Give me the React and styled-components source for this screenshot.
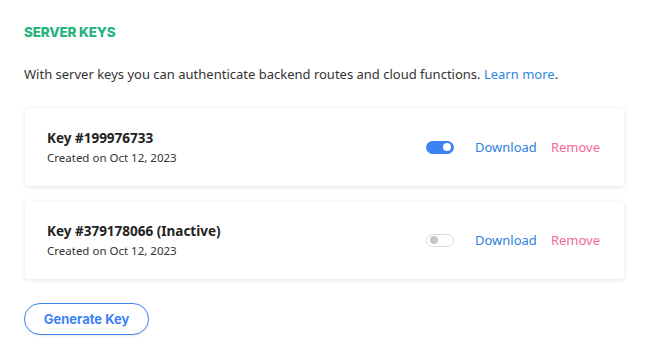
import React from "react";
import styled, { createGlobalStyle } from "styled-components";

const GlobalStyle = createGlobalStyle`
  * {
    box-sizing: border-box;
  }
  body {
    margin: 0;
    background: #ffffff;
    font-family: "Noto Sans", "Open Sans", sans-serif;
    color: #2b2b2b;
  }
`;

const Wrapper = styled.div`
  padding: 23px 24px 24px 24px;
  width: 650px;
`;

const Heading = styled.h3`
  font-family: "Inter", "Open Sans", sans-serif;
  font-weight: 800;
  font-size: 13.5px;
  line-height: 18px;
  letter-spacing: -0.2px;
  color: #25b47e;
  margin: 0 0 23px 0;
`;

const Intro = styled.p`
  font-size: 13px;
  line-height: 20px;
  margin: 0 0 24px 0;
  color: #333333;

  a {
    color: #2f86e0;
    text-decoration: none;
  }
`;

const List = styled.div`
  display: flex;
  flex-direction: column;
  gap: 15px;
  margin-left: 1px;
  width: 599px;
`;

const Card = styled.div`
  display: flex;
  align-items: center;
  height: 78px;
  padding: 0 24px 0 22px;
  background: #ffffff;
  border-radius: 4px;
  box-shadow: 0 1px 4px rgba(0, 0, 0, 0.12);
`;

const Info = styled.div`
  display: flex;
  flex-direction: column;
  gap: 2px;
`;

const Title = styled.div`
  font-weight: 700;
  font-size: 13.5px;
  line-height: 19px;
  color: #222222;
`;

const Sub = styled.div`
  font-size: 11.5px;
  line-height: 16px;
  color: #333333;
`;

const Actions = styled.div`
  margin-left: auto;
  display: flex;
  align-items: center;
`;

const Toggle = styled.span`
  position: relative;
  display: inline-block;
  width: 28px;
  height: 13px;
  border-radius: 7px;
  margin-right: 21px;
  background: ${({ $on }) => ($on ? "#3d82f5" : "#ffffff")};
  border: 1px solid ${({ $on }) => ($on ? "#3d82f5" : "#dddddd")};

  &::after {
    content: "";
    position: absolute;
    top: 1.5px;
    left: ${({ $on }) => ($on ? "15.5px" : "2.5px")};
    width: 8px;
    height: 8px;
    border-radius: 50%;
    background: ${({ $on }) => ($on ? "#ffffff" : "#c4c4c4")};
  }
`;

const LinkButton = styled.a`
  font-size: 13px;
  line-height: 18px;
  color: ${({ $danger }) => ($danger ? "#f2699a" : "#2f80e0")};
  margin-left: ${({ $danger }) => ($danger ? "14px" : "0")};
  text-decoration: none;
  cursor: pointer;
`;

const Generate = styled.button`
  margin-top: 24px;
  height: 32px;
  width: 125px;
  border-radius: 16px;
  border: 1px solid #3d82f5;
  background: #ffffff;
  color: #3d82f5;
  font-family: "Inter", "Open Sans", sans-serif;
  font-weight: 700;
  font-size: 13px;
  box-shadow: 0 1px 3px rgba(0, 0, 0, 0.08);
  cursor: pointer;
`;

const keys = [
  { id: "199976733", active: true },
  { id: "379178066", active: false },
];

export default function App() {
  return (
    <Wrapper>
      <GlobalStyle />
      <Heading>SERVER KEYS</Heading>
      <Intro>
        With server keys you can authenticate backend routes and cloud functions.{" "}
        <a href="#">Learn more</a>.
      </Intro>
      <List>
        {keys.map((k) => (
          <Card key={k.id}>
            <Info>
              <Title>
                Key #{k.id}
                {k.active ? "" : " (Inactive)"}
              </Title>
              <Sub>Created on Oct 12, 2023</Sub>
            </Info>
            <Actions>
              <Toggle $on={k.active} />
              <LinkButton>Download</LinkButton>
              <LinkButton $danger>Remove</LinkButton>
            </Actions>
          </Card>
        ))}
      </List>
      <Generate>Generate Key</Generate>
    </Wrapper>
  );
}
